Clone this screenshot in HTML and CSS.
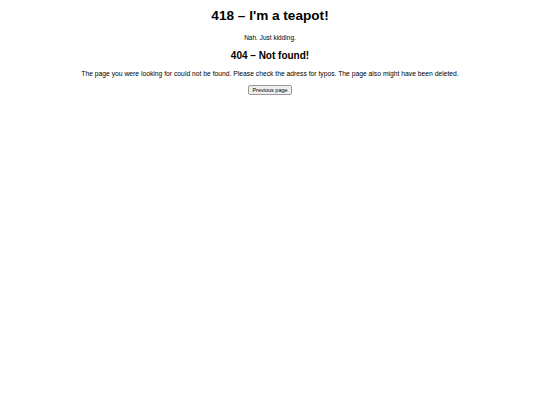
FILE: index.html
```html
<!DOCTYPE html>
<html>
<head>
<meta charset="utf-8">
<link rel="stylesheet" href="styles.css">
</head>
<body>
<div class="page">
  <h1 class="title">418 – I'm a teapot!</h1>
  <p class="note">Nah. Just kidding.</p>
  <h2 class="subtitle">404 – Not found!</h2>
  <p class="text">The page you were looking for could not be found. Please check the adress for typos. The page also might have been deleted.</p>
  <button class="back" type="button">Previous page</button>
</div>
</body>
</html>
```
FILE: styles.css
```css
html, body {
  margin: 0;
  padding: 0;
  background: #ffffff;
}
.page {
  font-family: "Liberation Sans", Arial, sans-serif;
  color: #000;
  text-align: center;
  padding-top: 8px;
}
.title {
  font-size: 13.6px;
  font-weight: bold;
  margin: 0;
  line-height: 16px;
}
.note {
  font-size: 6.5px;
  margin: 9.5px 0 0;
  line-height: 8px;
}
.subtitle {
  font-size: 10px;
  font-weight: bold;
  margin: 8px 0 0;
  line-height: 12px;
}
.text {
  font-size: 6.75px;
  margin: 8px 0 0;
  line-height: 8px;
}
.back {
  font-family: "Liberation Sans", Arial, sans-serif;
  font-size: 5.5px;
  margin-top: 3px;
  padding: 0.5px 3px;
  line-height: 7px;
  background: #efefef;
  border: 1px solid #999;
  border-radius: 2px;
  color: #000;
}
```
